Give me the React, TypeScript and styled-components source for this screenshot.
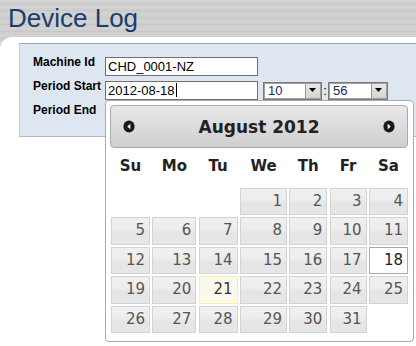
import React from "react";
import styled, { createGlobalStyle, css } from "styled-components";

const GlobalStyle = createGlobalStyle`
  html, body { margin: 0; padding: 0; background: #ffffff; }
  body { overflow: hidden; font-family: "Liberation Sans", Arial, sans-serif; }
  * { box-sizing: border-box; }
`;

const Page = styled.div`
  position: relative;
  width: 416px;
  height: 346px;
  overflow: hidden;
  display: flex;
  flex-direction: column;
  background:
    repeating-linear-gradient(180deg, rgba(255,255,255,0.10) 0 1px, rgba(0,0,0,0) 1px 3px, rgba(0,0,0,0.04) 3px 4px, rgba(0,0,0,0) 4px 7px),
    linear-gradient(180deg, #d0d0d0 0%, #c9c9c9 100%);
`;

const TitleBar = styled.h1`
  margin: 0;
  height: 37px;
  flex: none;
  padding-left: 8px;
  font-family: "Liberation Sans", Arial, sans-serif;
  font-weight: normal;
  font-size: 26px;
  line-height: 37px;
  color: #1b3c6d;
`;

const ContentPanel = styled.div`
  flex: 1;
  background: #ffffff;
  border-top-left-radius: 12px;
  padding: 6px 0 0 19px;
`;

const FormBox = styled.div`
  height: 94px;
  background: #dee7f1;
  border-top: 1px solid #a6a6a6;
  border-left: 1px solid #c4ccd6;
  border-bottom: 1px solid #b4b9bf;
  padding: 13px 0 0 13px;
`;

const FormGrid = styled.div`
  display: grid;
  grid-template-columns: 72px auto;
  row-gap: 5px;
  align-items: start;
`;

const Label = styled.label`
  font-family: "Liberation Sans", Arial, sans-serif;
  font-weight: bold;
  font-size: 12px;
  line-height: 14px;
  color: #000;
  margin-top: -2px;
  white-space: nowrap;
`;

const FieldRow = styled.div`
  display: flex;
  align-items: center;
  gap: 5px;
  height: 19px;
`;

const TextBox = styled.div`
  width: 153px;
  height: 19px;
  border: 1px solid #707070;
  background: #ffffff;
  padding-left: 2px;
  font-family: "Liberation Sans", Arial, sans-serif;
  font-size: 13px;
  line-height: 17px;
  color: #000;
  white-space: nowrap;
`;

const Caret = styled.span`
  display: inline-block;
  width: 1px;
  height: 14px;
  background: #000;
  vertical-align: -2px;
  margin-left: 1px;
`;

const TimeGroup = styled.div`
  display: flex;
  align-items: center;
`;

const SelectBox = styled.div<{ $w: number }>`
  width: ${(p) => p.$w}px;
  height: 18px;
  border: 1px solid #7a7a7a;
  box-shadow: inset 0 0 0 1px #a0a0a0;
  background: #ffffff;
  display: flex;
  align-items: stretch;
  padding: 1px;
`;

const SelectValue = styled.span`
  flex: 1;
  padding-left: 3px;
  font-family: "Liberation Sans", Arial, sans-serif;
  font-size: 13px;
  line-height: 14px;
  color: #17295e;
`;

const SelectArrow = styled.span`
  width: 15px;
  background: linear-gradient(180deg, #e8e8e8, #d4d4d4);
  border-left: 1px solid #9a9a9a;
  display: flex;
  align-items: center;
  justify-content: center;
`;

const Colon = styled.span`
  width: 6px;
  text-align: center;
  font-family: "Liberation Sans", Arial, sans-serif;
  font-size: 13px;
  color: #000;
`;

/* ---------- Datepicker ---------- */

const Datepicker = styled.div`
  position: absolute;
  left: 105px;
  top: 100px;
  width: 309px;
  height: 242px;
  background: #ffffff;
  border: 1px solid #aaaaaa;
  border-radius: 4px;
  padding: 4px 5px 4px 4px;
  font-family: "DejaVu Sans", Verdana, sans-serif;
`;

const DPHeader = styled.div`
  height: 43px;
  border: 1px solid #aaaaaa;
  border-radius: 4px;
  background: linear-gradient(180deg, #e8e8e8 0%, #dddddd 45%, #cfcfcf 100%);
  display: flex;
  align-items: center;
  justify-content: space-between;
  padding: 0 11px 0 11px;
`;

const NavButton = styled.span`
  width: 13px;
  height: 13px;
  display: flex;
  align-items: center;
  justify-content: center;
`;

const DPTitle = styled.span`
  font-family: "DejaVu Sans", Verdana, sans-serif;
  font-weight: bold;
  font-size: 17px;
  color: #222222;
`;

const CalGrid = styled.div`
  margin-left: 1px;
  width: 297px;
  display: grid;
  grid-template-columns: 39px 44px 39px 47px 38px 37px 39px;
  grid-template-rows: 37.5px repeat(5, 27.5px);
  column-gap: 2.33px;
  row-gap: 2px;
`;

const DayName = styled.div`
  display: flex;
  align-items: center;
  justify-content: center;
  padding-bottom: 2px;
  font-family: "DejaVu Sans", Verdana, sans-serif;
  font-weight: bold;
  font-size: 15px;
  color: #222222;
`;

type Variant = "default" | "highlight" | "active";

const DayCell = styled.div<{ $variant: Variant }>`
  border: 1px solid #d3d3d3;
  background: linear-gradient(180deg, #f0f0f0 0%, #ededed 42%, #e5e5e5 58%, #e6e6e6 100%);
  color: #555555;
  font-family: "DejaVu Sans", Verdana, sans-serif;
  font-size: 15px;
  line-height: 25px;
  text-align: right;
  padding-right: 4px;
  ${(p) =>
    p.$variant === "highlight" &&
    css`
      border-color: #fcefa1;
      background: #fbf9ee;
      color: #363636;
    `}
  ${(p) =>
    p.$variant === "active" &&
    css`
      border-color: #aaaaaa;
      background: #ffffff;
      color: #212121;
    `}
`;

const EmptyCell = styled.div``;

const ArrowDown = () => (
  <svg width="8" height="5" viewBox="0 0 8 5">
    <path d="M0 0 H7 L3.5 4 Z" fill="#000" />
  </svg>
);

const CircleTriangle = ({ dir }: { dir: "w" | "e" }) => (
  <svg width="12" height="13" viewBox="0 0 12 13">
    <ellipse cx="6" cy="6.5" rx="5.6" ry="6" fill="#1a1a1a" />
    {dir === "w" ? (
      <path d="M7.3 3.8 V9.2 L4.3 6.5 Z" fill="#ffffff" />
    ) : (
      <path d="M4.7 3.8 V9.2 L7.7 6.5 Z" fill="#ffffff" />
    )}
  </svg>
);

const dayNames = ["Su", "Mo", "Tu", "We", "Th", "Fr", "Sa"];
const leadingBlanks = 3;
const daysInMonth = 31;
const selectedDay = 18;
const todayDay = 21;

export default function App() {
  const cells: React.ReactNode[] = [];
  for (let i = 0; i < leadingBlanks; i++) cells.push(<EmptyCell key={`b${i}`} />);
  for (let d = 1; d <= daysInMonth; d++) {
    const v: Variant = d === selectedDay ? "active" : d === todayDay ? "highlight" : "default";
    cells.push(
      <DayCell key={d} $variant={v}>
        {d}
      </DayCell>
    );
  }

  return (
    <>
      <GlobalStyle />
      <Page>
        <TitleBar>Device Log</TitleBar>
        <ContentPanel>
          <FormBox>
            <FormGrid>
              <Label>Machine Id</Label>
              <FieldRow>
                <TextBox>CHD_0001-NZ</TextBox>
              </FieldRow>
              <Label>Period Start</Label>
              <FieldRow>
                <TextBox>
                  2012-08-18
                  <Caret />
                </TextBox>
                <TimeGroup>
                  <SelectBox $w={59}>
                    <SelectValue>10</SelectValue>
                    <SelectArrow>
                      <ArrowDown />
                    </SelectArrow>
                  </SelectBox>
                  <Colon>:</Colon>
                  <SelectBox $w={60}>
                    <SelectValue>56</SelectValue>
                    <SelectArrow>
                      <ArrowDown />
                    </SelectArrow>
                  </SelectBox>
                </TimeGroup>
              </FieldRow>
              <Label>Period End</Label>
              <FieldRow>
                <TextBox />
              </FieldRow>
            </FormGrid>
          </FormBox>
        </ContentPanel>

        <Datepicker>
          <DPHeader>
            <NavButton>
              <CircleTriangle dir="w" />
            </NavButton>
            <DPTitle>August 2012</DPTitle>
            <NavButton>
              <CircleTriangle dir="e" />
            </NavButton>
          </DPHeader>
          <CalGrid>
            {dayNames.map((n) => (
              <DayName key={n}>{n}</DayName>
            ))}
            {cells}
          </CalGrid>
        </Datepicker>
      </Page>
    </>
  );
}
